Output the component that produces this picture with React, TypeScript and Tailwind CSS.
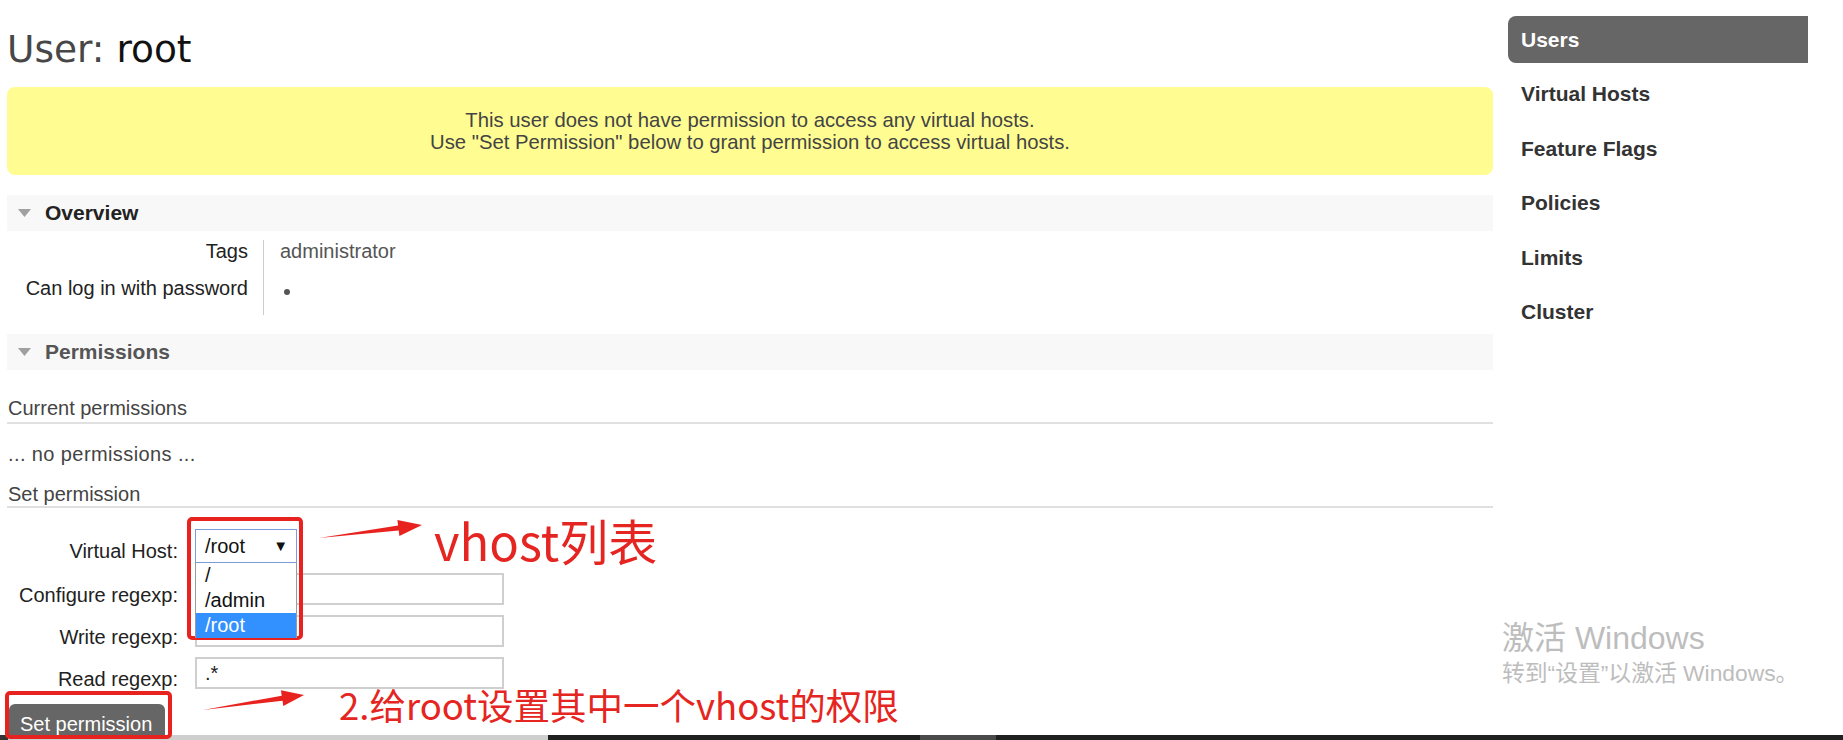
import React from 'react'

const NAV = ['Users', 'Virtual Hosts', 'Feature Flags', 'Policies', 'Limits', 'Cluster']

function SectionHeader({ title, dim }: { title: string; dim?: boolean }) {
  return (
    <div className="h-[36px] bg-[#f8f8f8] flex items-center pl-[11px]">
      <svg width="13" height="8" viewBox="0 0 13 8" className="shrink-0">
        <polygon points="0,0 13,0 6.5,8" fill="#a0a0a0" />
      </svg>
      <span className={`ml-[14px] text-[21px] font-bold leading-[22px] ${dim ? 'text-[#555]' : 'text-[#222]'}`}>
        {title}
      </span>
    </div>
  )
}

function FormRow({ label, children }: { label: string; children: React.ReactNode }) {
  return (
    <div className="flex">
      <div className="w-[171px] text-right pt-[12px] leading-[20px] text-[#222]">{label}</div>
      <div className="ml-[17px]">{children}</div>
    </div>
  )
}

function TextInput({ value }: { value?: string }) {
  return (
    <div className="w-[309px] h-[32px] border-2 border-[#cfcfcf] bg-white pl-[8px] leading-[28px] text-[#222]">
      {value}
    </div>
  )
}

// red annotation arrow, drawn from tail to tip
function Arrow({ points }: { points: string }) {
  return <polygon points={points} fill="#e8231f" />
}

export default function App() {
  return (
    <div className="relative w-[1843px] h-[740px] flex flex-col bg-white overflow-hidden font-['Liberation_Sans',Arial,sans-serif] text-[20px]">
      <div className="flex-1 min-h-0 flex overflow-hidden">
        {/* Main column */}
        <main className="ml-[7px] w-[1486px] shrink-0">
          <h1 className="mt-[28px] text-[37.5px] leading-[42px] font-normal text-[#474747] font-['DejaVu_Sans',Verdana,sans-serif]">
            User: <span className="text-[#111]">root</span>
          </h1>

          <div className="mt-[17px] h-[88px] rounded-[8px] bg-[#fffd92] flex flex-col items-center justify-center text-[20.3px] leading-[22px] text-[#444]">
            <p>This user does not have permission to access any virtual hosts.</p>
            <p>Use "Set Permission" below to grant permission to access virtual hosts.</p>
          </div>

          <div className="mt-[20px]">
            <SectionHeader title="Overview" />
          </div>

          <div className="mt-[9px] flex">
            <div className="w-[257px] pr-[15px] border-r border-[#ccc] text-right text-[#222]">
              <div className="h-[37px] leading-[22px]">Tags</div>
              <div className="h-[38px] leading-[22px]">Can log in with password</div>
            </div>
            <div className="pl-[16px] text-[#555]">
              <div className="h-[37px] leading-[22px]">administrator</div>
              <div className="h-[38px] pt-[12px] pl-[4px]">
                <span className="block w-[6px] h-[6px] rounded-full bg-[#555]" />
              </div>
            </div>
          </div>

          <div className="mt-[19px]">
            <SectionHeader title="Permissions" dim />
          </div>

          <h3 className="mt-[27px] leading-[22px] pb-[3px] border-b-2 border-[#e0e0e0] text-[#444] pl-[1px]">
            Current permissions
          </h3>
          <p className="mt-[19px] leading-[22px] text-[#444] pl-[1px] tracking-[0.4px]">... no permissions ...</p>
          <h3 className="mt-[18px] leading-[22px] pb-[1px] border-b-2 border-[#e0e0e0] text-[#444] pl-[1px]">
            Set permission
          </h3>

          <div className="mt-[21px] flex flex-col gap-[10px]">
            <FormRow label="Virtual Host:">
              <div className="relative">
                <div className="w-[102px] h-[34px] border border-[#7b9ed8] bg-white flex items-center justify-between pl-[9px] pr-[8px] text-[#111]">
                  <span>/root</span>
                  <span className="text-[15px]">▼</span>
                </div>
                <ul className="absolute left-0 top-[34px] z-10 w-[102px] bg-white border-x border-[#9a9a9a] text-[#111]">
                  <li className="h-[25px] leading-[25px] pl-[9px]">/</li>
                  <li className="h-[25px] leading-[25px] pl-[9px]">/admin</li>
                  <li className="h-[25px] leading-[25px] pl-[9px] bg-[#3390ff] text-white">/root</li>
                </ul>
              </div>
            </FormRow>
            <FormRow label="Configure regexp:">
              <TextInput />
            </FormRow>
            <FormRow label="Write regexp:">
              <TextInput />
            </FormRow>
            <FormRow label="Read regexp:">
              <TextInput value=".*" />
            </FormRow>
          </div>

          <button className="mt-[15px] ml-[2px] h-[44px] pl-[11px] pr-[13px] pt-[9px] pb-[13px] leading-[22px] rounded-[6px] bg-[#666] text-white">
            Set permission
          </button>
        </main>

        {/* Sidebar */}
        <nav className="ml-[15px] w-[300px] shrink-0 pt-[16px] flex flex-col gap-[7.4px]">
          {NAV.map((item, i) => (
            <a
              key={item}
              className={`h-[47px] leading-[47px] pl-[13px] text-[21px] font-bold ${
                i === 0 ? 'bg-[#666] text-white rounded-l-[8px]' : 'text-[#333]'
              }`}
            >
              {item}
            </a>
          ))}
        </nav>
      </div>

      {/* horizontal scrollbar strip */}
      <div className="h-[5px] flex shrink-0">
        <div className="w-[8px] bg-[#333]" />
        <div className="w-[540px] bg-[#cfcfcf]" />
        <div className="w-[372px] bg-[#202020]" />
        <div className="w-[76px] bg-[#4a4a4a]" />
        <div className="flex-1 bg-[#202020]" />
      </div>

      {/* Windows activation watermark */}
      <div className="absolute left-[1502px] top-[619px] text-[#bdbdbd] font-['Liberation_Sans','Noto_Sans_CJK_SC',sans-serif]">
        <div className="text-[32px] leading-[38px]">激活 Windows</div>
        <div className="text-[22.8px] leading-[26px] mt-[3px]">转到“设置”以激活 Windows。</div>
      </div>

      {/* Annotations */}
      <div className="absolute left-[187px] top-[517px] w-[116px] h-[123px] border-4 border-[#e8231f] rounded-[5px]" />
      <div className="absolute left-[5px] top-[691px] w-[167px] h-[48px] border-4 border-[#e8231f] rounded-[5px]" />
      <svg className="absolute left-0 top-0 pointer-events-none" width="1843" height="740">
        <Arrow points="319,538 398.7,530.5 399.4,535.9 422,525 397.4,520.1 398.1,525.5" />
        <Arrow points="203,710 282.5,700.7 283.3,706.1 304,695 280.9,690.3 281.7,695.7" />
      </svg>
      <div className="absolute left-[434px] top-[515px] text-[49px] leading-none text-[#e52521] font-['Noto_Sans_CJK_SC',sans-serif]">
        vhost列表
      </div>
      <div className="absolute left-[339px] top-[687px] text-[36.5px] leading-none text-[#e52521] font-['Noto_Sans_CJK_SC',sans-serif]">
        2.给root设置其中一个vhost的权限
      </div>
    </div>
  )
}
